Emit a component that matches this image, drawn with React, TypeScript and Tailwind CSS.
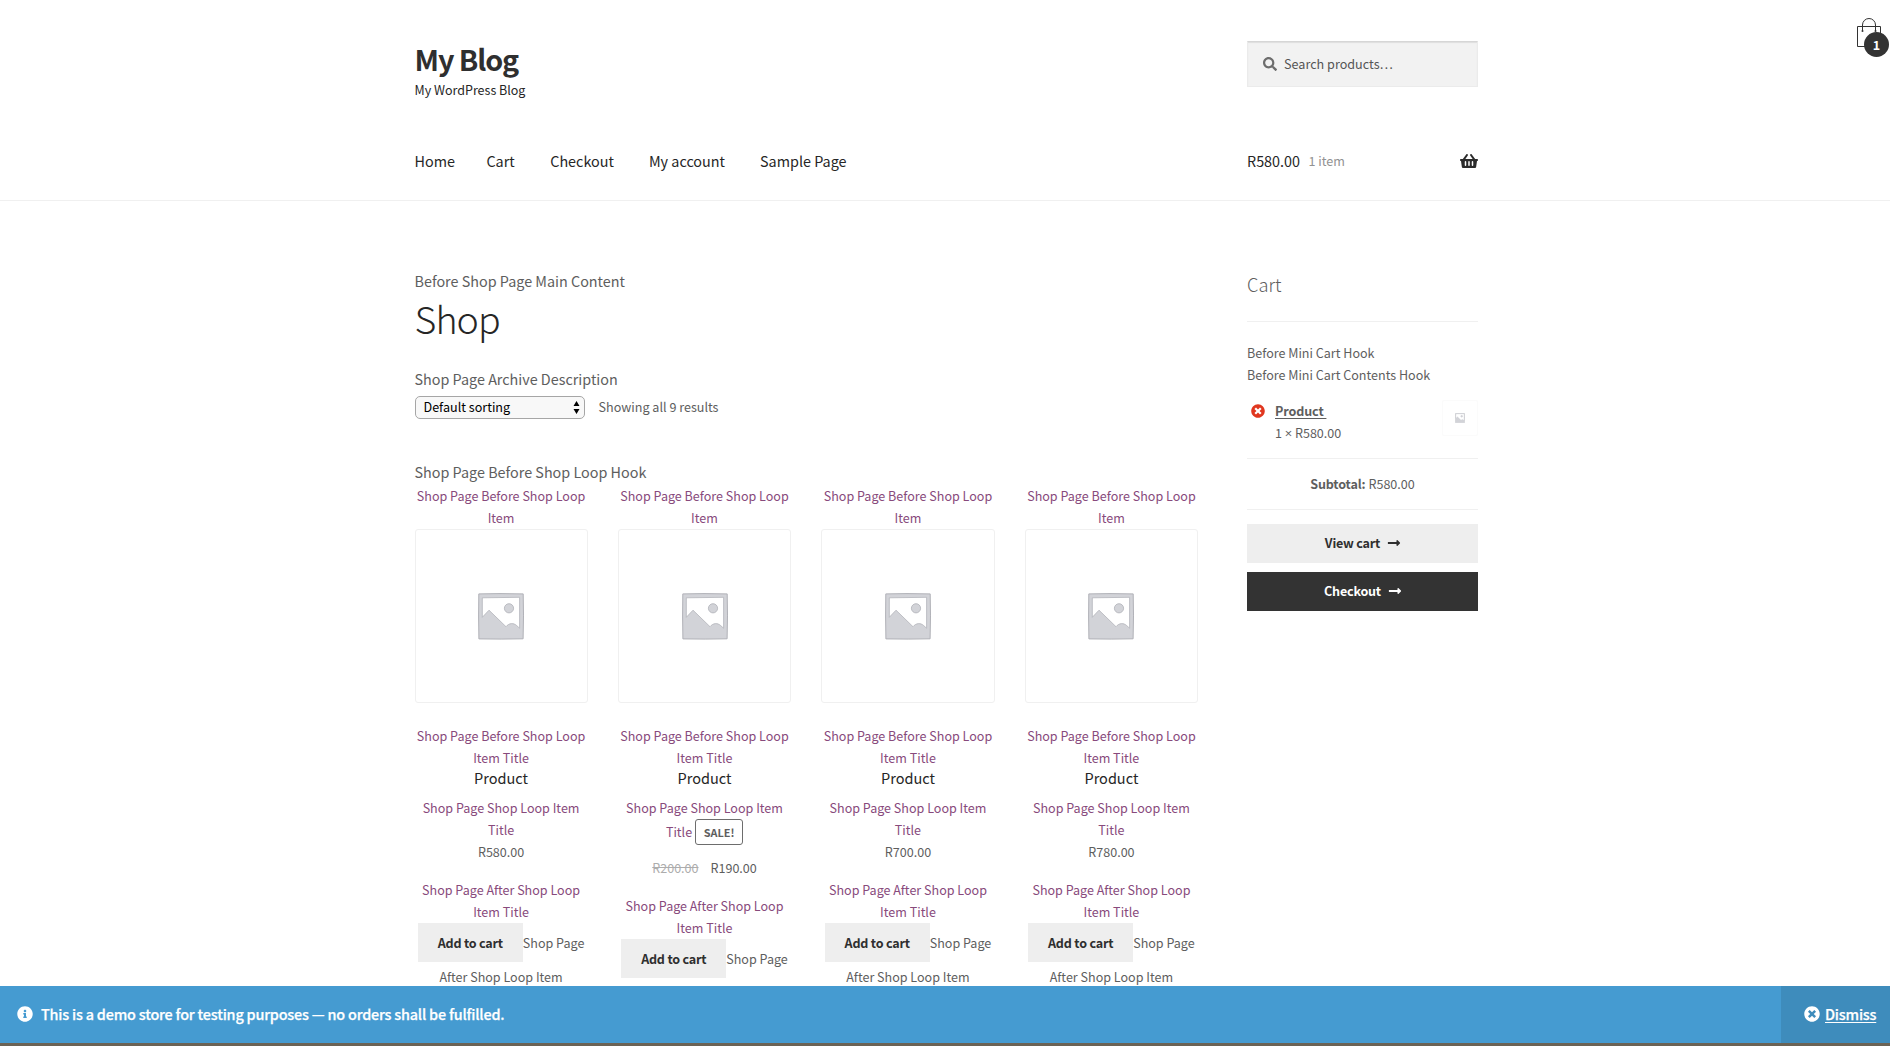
import { FaSearch, FaShoppingBasket, FaTimesCircle, FaInfoCircle, FaLongArrowAltRight } from "react-icons/fa";

type Product = { price: string; was?: string };

const nav: { label: string; gap: string }[] = [
  { label: "Home", gap: "mr-[31.5px]" },
  { label: "Cart", gap: "mr-[35.5px]" },
  { label: "Checkout", gap: "mr-[35px]" },
  { label: "My account", gap: "mr-[35px]" },
  { label: "Sample Page", gap: "" },
];

const products: Product[] = [
  { price: "R580.00" },
  { price: "R190.00", was: "R200.00" },
  { price: "R700.00" },
  { price: "R780.00" },
];

function Placeholder({ className }: { className: string }) {
  return (
    <svg viewBox="0 0 46 47" className={className} aria-hidden="true">
      <path d="M.8.9 22 .6 45.2.9l.3 22-.4 22.9-22 .3L.9 45.9.6 23Z" fill="#d2d3d8" stroke="#b0b1b7" strokeWidth="1" />
      <path
        d="M4.3 4.8 41.600 4.300V35.200L38.600 32.500c-3-2.700-7.500-2.700-10.600 1.200L11 17.200 4.300 24.300Z"
        fill="#fff"
        stroke="#b3b4ba"
        strokeWidth=".8"
      />
      <circle cx="31" cy="15.300" r="4.600" fill="#d2d3d8" stroke="#b0b1b7" strokeWidth=".8" />
    </svg>
  );
}

function Header() {
  return (
    <header className="h-[201px] border-b border-[#f0f0f0] pl-[414.5px]">
      <div className="flex w-[1063.5px] justify-between pt-[41px]">
        <div>
          <h1 className="text-[28.76px] leading-[36px] font-bold tracking-[-1.1px] text-[#2f2f2f]">My Blog</h1>
          <p className="mt-[2px] text-[12.5px] leading-[22px] text-[#262626]">My WordPress Blog</p>
        </div>
        <div className="flex h-[46px] w-[231px] items-center border border-[#ebebeb] border-t-[#d6d6d6] bg-[#f2f2f2] pl-[15px] shadow-[inset_0_1px_1px_rgba(0,0,0,0.08)]">
          <FaSearch className="size-[14px] text-[#6d6d6d]" />
          <span className="ml-[7px] text-[12.62px] leading-[22px] text-[#555]">Search products…</span>
        </div>
      </div>
      <div className="mt-[47px] flex w-[1063.5px]">
        <nav className="flex w-[832.5px] text-[14.38px] leading-[26px] text-[#262626]">
          {nav.map((n) => (
            <a key={n.label} className={n.gap}>{n.label}</a>
          ))}
        </nav>
        <div className="flex flex-1 items-center leading-[26px]">
          <span className="text-[14.38px] text-[#262626]">R580.00</span>
          <span className="ml-[8.5px] text-[12.58px] text-[#929292]">1 item</span>
          <FaShoppingBasket className="ml-auto size-[18px] text-[#2b2b2b]" />
        </div>
      </div>
    </header>
  );
}

function Card({ product }: { product: Product }) {
  return (
    <li className="text-center text-[12.55px] leading-[22px] text-[#5e5e5e]">
      <p className="text-[#884a7c]">Shop Page Before Shop Loop<br />Item</p>
      <div className="flex h-[174px] w-full items-center justify-center rounded-[3px] border border-[#f0f0f0]">
        <Placeholder className="h-[47px] w-[46px]" />
      </div>
      <p className="mt-[22px] text-[#884a7c]">Shop Page Before Shop Loop<br />Item Title</p>
      <h2 className="mt-px mb-[11px] text-[14.5px] leading-[16px] text-[#262626]">Product</h2>
      {product.was ? (
        <>
          <p className="text-[#884a7c]">Shop Page Shop Loop Item</p>
          <div className="mb-[12px] flex h-[26px] items-center justify-center">
            <span className="text-[#884a7c]">Title</span>
            <span className="ml-[3px] flex h-[26px] w-[48px] items-center justify-center rounded-[3px] border border-[#6d6d6d] text-[10.9px] font-bold">SALE!</span>
          </div>
          <p className="flex justify-center gap-[12px]">
            <del className="text-[#adadad]">{product.was}</del>
            <span>{product.price}</span>
          </p>
        </>
      ) : (
        <>
          <p className="text-[#884a7c]">Shop Page Shop Loop Item<br />Title</p>
          <p>{product.price}</p>
        </>
      )}
      <p className="mt-[16px] text-[#884a7c]">Shop Page After Shop Loop<br />Item Title</p>
      <div className="flex justify-center pb-[4px]">
        <button className="h-[39px] w-[105px] bg-[#eee] pt-[1px] font-bold tracking-[-0.2px] text-[#2f2f2f]">Add to cart</button>
        <span className="pt-[9px]">Shop Page</span>
      </div>
      <p>After Shop Loop Item</p>
    </li>
  );
}

function Shop() {
  return (
    <main className="w-[783.5px] pt-[67px] text-[14.36px] leading-[26px] text-[#5e5e5e]">
      <p>Before Shop Page Main Content</p>
      <h1 className="text-[37.6px] leading-[48px] font-light tracking-[-0.9px] text-[#262626]">Shop</h1>
      <p className="mt-[24px]">Shop Page Archive Description</p>
      <div className="mt-[4px] flex h-[23px] text-[12.58px] leading-[22px]">
        <div className="flex h-[23px] w-[170px] items-center justify-between rounded-[5px] border border-[#a6a6a6] bg-[#f8f8f8] pr-[4px] pl-[8px] text-black">
          <span className="leading-[22px] pb-[1.500px]">Default sorting</span>
          <svg viewBox="0 0 7 13" className="h-[13px] w-[7px]" aria-hidden="true">
            <path d="M3.500 0 6.500 5H.5ZM3.500 13 .5 8h6Z" fill="#000" />
          </svg>
        </div>
        <span className="ml-[14px]">Showing all 9 results</span>
      </div>
      <p className="mt-[40px]">Shop Page Before Shop Loop Hook</p>
      <ul className="grid grid-cols-4 gap-x-[30.33px]">
        {products.map((p) => (
          <Card key={p.price} product={p} />
        ))}
      </ul>
    </main>
  );
}

function Sidebar() {
  return (
    <aside className="ml-[49px] w-[231px] pt-[70px] text-[12.55px] leading-[22px] text-[#5e5e5e]">
      <h2 className="border-b border-[#f0f0f0] pb-[24px] text-[18.3px] leading-[26px] font-light">Cart</h2>
      <p className="mt-[20px]">Before Mini Cart Hook</p>
      <p>Before Mini Cart Contents Hook</p>
      <div className="mt-[14px] flex h-[59px] border-b border-[#f0f0f0]">
        <FaTimesCircle className="mt-[4px] ml-[4px] size-[14px] text-[#e0371f]" />
        <div className="ml-[10px]">
          <p className="font-bold tracking-[-0.1px] whitespace-pre underline underline-offset-2">{"Product "}</p>
          <p className="flex"><span>1</span><span className="mx-[2.5px] w-[8px] text-center font-['Open_Sans'] text-[13px]">×</span><span>R580.00</span></p>
        </div>
        <div className="ml-auto flex size-[36px] items-center justify-center rounded-[2px] border border-[#fbfbfb]">
          <Placeholder className="size-[10px]" />
        </div>
      </div>
      <p className="flex h-[51px] justify-center border-b border-[#f0f0f0] pt-[14px]">
        <b className="mr-[3px] tracking-[-0.15px]">Subtotal:</b> R580.00
      </p>
      <a className="mt-[14px] flex h-[39px] justify-center bg-[#eee] pt-[8px] pl-px font-bold tracking-[-0.2px] text-[#2f2f2f]">
        View cart
        <FaLongArrowAltRight className="mt-[4px] ml-[7px] size-[14px]" />
      </a>
      <a className="mt-[9px] flex h-[39px] justify-center bg-[#333] pt-[8px] pl-px font-bold tracking-[-0.2px] text-white">
        Checkout
        <FaLongArrowAltRight className="mt-[4px] ml-[7px] size-[14px]" />
      </a>
    </aside>
  );
}

function FloatingBag() {
  return (
    <div className="absolute top-[17px] right-0 h-[42px] w-[34px]">
      <svg viewBox="0 0 34 42" className="h-[42px] w-[34px]" aria-hidden="true">
        <path d="M1.500 9.500H24.500V29.500H1.500Z" fill="none" stroke="#333" strokeWidth="1" />
        <path d="M6.500 14V8a6.500 6.500 0 0 1 13 0v6" fill="none" stroke="#333" strokeWidth="1" />
        <circle cx="6.500" cy="14" r="1" fill="#333" />
        <circle cx="19.500" cy="14" r="1" fill="#333" />
      </svg>
      <span className="absolute top-[15px] left-[8px] flex size-[25px] items-center justify-center rounded-full bg-[#333] text-[12.58px] leading-[22px] font-bold text-white">1</span>
    </div>
  );
}

function Notice() {
  return (
    <div className="absolute inset-x-0 bottom-0 border-b-[3px] border-[#6b6355] text-[14.38px] leading-[26px] font-medium tracking-[-0.19px] text-white">
      <div className="flex h-[57px] bg-[#459bd1]">
        <div className="flex flex-1 pt-[15px] pl-[17px]">
          <FaInfoCircle className="mt-[5px] size-[16px]" />
          <span className="ml-[8px] [-webkit-text-stroke:0.25px_white]">This is a demo store for testing purposes — no orders shall be fulfilled.</span>
        </div>
        <div className="flex w-[109px] bg-[#3e8cbc] pt-[15px] pl-[23px]">
          <FaTimesCircle className="mt-[5px] size-[16px]" />
          <span className="ml-[5px] underline underline-offset-2 [-webkit-text-stroke:0.25px_white]">Dismiss</span>
        </div>
      </div>
    </div>
  );
}

export default function App() {
  return (
    <div className="relative h-[1046px] w-[1890px] overflow-hidden bg-white font-['Noto_Sans_CJK_SC','Open_Sans',sans-serif]">
      <Header />
      <div className="flex pl-[414.5px]">
        <Shop />
        <Sidebar />
      </div>
      <FloatingBag />
      <Notice />
    </div>
  );
}
